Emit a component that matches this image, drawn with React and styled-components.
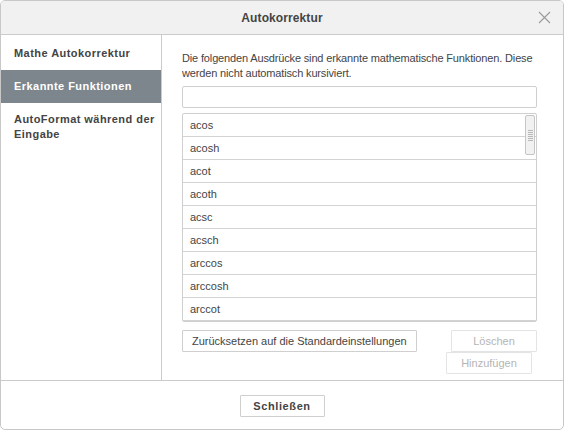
import styled, { createGlobalStyle } from 'styled-components';

const GlobalStyle = createGlobalStyle`
  html, body {
    margin: 0;
    padding: 0;
    background: #ffffff;
  }
  body {
    font-family: 'Liberation Sans', Arial, sans-serif;
    font-size: 11px;
    color: #444444;
  }
`;

const functions = ['acos', 'acosh', 'acot', 'acoth', 'acsc', 'acsch', 'arccos', 'arccosh', 'arccot'];

const menu = [
  { label: 'Mathe Autokorrektur' },
  { label: 'Erkannte Funktionen', active: true },
  { label: 'AutoFormat während der Eingabe' },
];

export default function App() {
  return (
    <>
      <GlobalStyle />
      <Dialog>
        <Header>
          <Title>Autokorrektur</Title>
          <CloseButton aria-label="close">
            <svg width="13" height="13" viewBox="0 0 13 13">
              <path d="M1 1 L12 12 M12 1 L1 12" stroke="#9a9a9a" strokeWidth="1.1" fill="none" />
            </svg>
          </CloseButton>
        </Header>
        <Body>
          <Sidebar>
            {menu.map((item) => (
              <MenuItem key={item.label} $active={item.active}>
                {item.label}
              </MenuItem>
            ))}
          </Sidebar>
          <Content>
            <Description>
              Die folgenden Ausdrücke sind erkannte mathematische Funktionen. Diese werden nicht automatisch kursiviert.
            </Description>
            <TextInput type="text" />
            <List>
              {functions.map((f) => (
                <Row key={f}>{f}</Row>
              ))}
              <Thumb>
                <Grip />
              </Thumb>
            </List>
            <Actions>
              <Button>Zurücksetzen auf die Standardeinstellungen</Button>
              <ActionColumn>
                <Button disabled $width={86}>Löschen</Button>
                <Button disabled $width={86} $shift={5}>Hinzufügen</Button>
              </ActionColumn>
            </Actions>
          </Content>
        </Body>
        <Footer>
          <Button $bold $width={85}>Schließen</Button>
        </Footer>
      </Dialog>
    </>
  );
}

const Dialog = styled.div`
  width: 564px;
  height: 430px;
  box-sizing: border-box;
  border: 1px solid #c8c8c8;
  border-radius: 5px;
  display: flex;
  flex-direction: column;
  overflow: hidden;
  background: #ffffff;
`;

const Header = styled.div`
  height: 33px;
  flex: none;
  background: #f1f1f1;
  border-bottom: 1px solid #cbcbcb;
  display: flex;
  align-items: center;
  justify-content: center;
  position: relative;
`;

const Title = styled.div`
  font-size: 12px;
  font-weight: bold;
  letter-spacing: 0.1px;
  color: #444444;
`;

const CloseButton = styled.div`
  position: absolute;
  right: 12px;
  top: 10px;
  width: 13px;
  height: 13px;
  display: flex;
`;

const Body = styled.div`
  flex: 1;
  display: flex;
  border-bottom: 1px solid #cbcbcb;
`;

const Sidebar = styled.div`
  width: 160px;
  flex: none;
  border-right: 1px solid #cbcbcb;
  padding-top: 2px;
  display: flex;
  flex-direction: column;
`;

const MenuItem = styled.div`
  padding: 9px 6px 9px 13px;
  line-height: 15px;
  font-weight: bold;
  font-size: 11px;
  letter-spacing: 0.45px;
  color: ${(p) => (p.$active ? '#ffffff' : '#444444')};
  background: ${(p) => (p.$active ? '#7e868d' : 'transparent')};
`;

const Content = styled.div`
  flex: 1;
  padding: 16px 26px 0 20px;
  display: flex;
  flex-direction: column;
`;

const Description = styled.div`
  line-height: 15px;
  font-size: 11px;
  letter-spacing: -0.15px;
  color: #444444;
  margin-bottom: 5px;
`;

const TextInput = styled.input`
  height: 22px;
  box-sizing: border-box;
  border: 1px solid #cfcfcf;
  border-radius: 2px;
  margin: 0 0 5px;
  padding: 0 6px;
  font-family: inherit;
  font-size: 11px;
  outline: none;
`;

const List = styled.div`
  position: relative;
  border: 1px solid #cfcfcf;
  border-radius: 2px;
  display: flex;
  flex-direction: column;
`;

const Row = styled.div`
  height: 22px;
  line-height: 22px;
  padding-left: 7px;
  font-size: 11px;
  color: #444444;
  border-bottom: 1px solid #d3d3d3;
  &:last-of-type {
    border-bottom: none;
  }
`;

const Thumb = styled.div`
  position: absolute;
  right: 1px;
  top: 1px;
  width: 8px;
  height: 38px;
  background: #f1f1f1;
  border: 1px solid #c6c6c6;
  border-radius: 2px;
  display: flex;
  align-items: center;
  justify-content: center;
`;

const Grip = styled.div`
  width: 5px;
  height: 11px;
  background: repeating-linear-gradient(
    to bottom,
    #b8b8b8 0,
    #b8b8b8 1px,
    transparent 1px,
    transparent 2px
  );
`;

const Actions = styled.div`
  display: flex;
  justify-content: space-between;
  margin-top: 8px;
`;

const ActionColumn = styled.div`
  display: flex;
  flex-direction: column;
  align-items: flex-end;
`;

const Button = styled.button`
  height: 22px;
  box-sizing: border-box;
  width: ${(p) => (p.$width ? `${p.$width}px` : 'auto')};
  margin-right: ${(p) => (p.$shift ? `${p.$shift}px` : '0')};
  padding: 0 9px;
  background: #ffffff;
  border: 1px solid #cfcfcf;
  border-radius: 1px;
  font-family: 'Liberation Sans', Arial, sans-serif;
  font-size: 11px;
  font-weight: ${(p) => (p.$bold ? 'bold' : 'normal')};
  letter-spacing: ${(p) => (p.$bold ? '0.6px' : '0')};
  color: #444444;
  &:disabled {
    color: #b5b5b5;
    border-color: #e4e4e4;
  }
`;

const Footer = styled.div`
  height: 48px;
  flex: none;
  display: flex;
  align-items: center;
  justify-content: center;
  padding-top: 2px;
  box-sizing: border-box;
`;
